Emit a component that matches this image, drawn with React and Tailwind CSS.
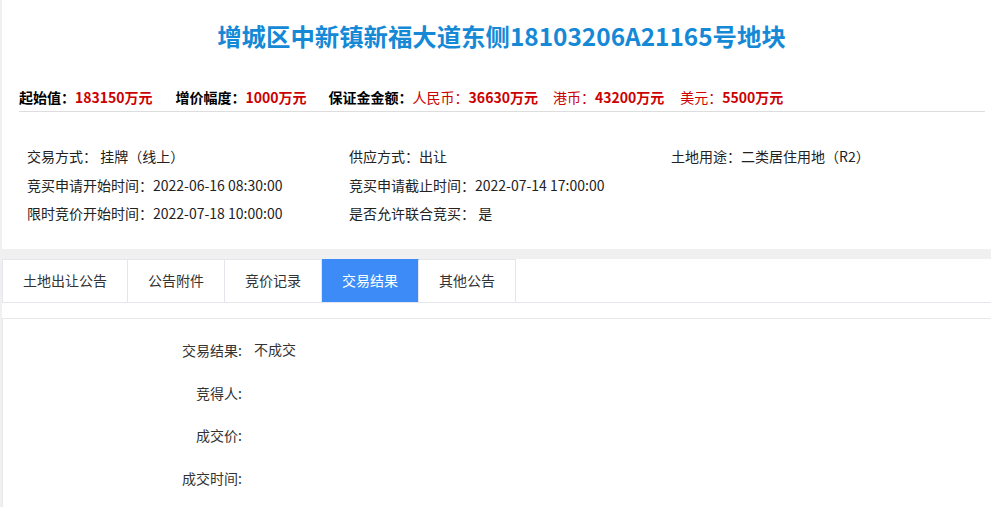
export default function App() {
  const font = { fontFamily: '"Microsoft YaHei", "Noto Sans CJK SC", sans-serif' };
  const info = [
    ["交易方式： 挂牌（线上）", "供应方式：出让", "土地用途：二类居住用地（R2）"],
    ["竞买申请开始时间：2022-06-16 08:30:00", "竞买申请截止时间：2022-07-14 17:00:00", ""],
    ["限时竞价开始时间：2022-07-18 10:00:00", "是否允许联合竞买： 是", ""],
  ];
  const tabs = ["土地出让公告", "公告附件", "竞价记录", "交易结果", "其他公告"];
  const rows = [
    ["交易结果:", "不成交"],
    ["竞得人:", ""],
    ["成交价:", ""],
    ["成交时间:", ""],
  ];
  return (
    <div className="min-h-screen bg-[#f0f0f0] pl-[2px] text-[#333]" style={font}>
      {/* top section */}
      <div className="bg-white pt-[18px] pb-[21px]">
        <h1 className="text-center text-[24.4px] leading-[36px] font-bold text-[#1589d6] pl-[10px]">
          增城区中新镇新福大道东侧18103206A21165号地块
        </h1>
        <div className="mt-[33px] ml-[17px] mr-[6px] border-b border-[#dddddd] pb-[4px]">
          <div className="flex items-center text-[14px] leading-[20px] font-bold text-black">
            <span className="mr-[23px]">
              起始值：<span className="text-[#cc0000]">183150万元</span>
            </span>
            <span className="mr-[22px]">
              增价幅度：<span className="text-[#cc0000]">1000万元</span>
            </span>
            <span>
              保证金金额：
              <span className="text-[#cc0000] font-normal">人民币：</span>
              <span className="text-[#cc0000] mr-[15px]">36630万元</span>
              <span className="text-[#cc0000] font-normal">港币：</span>
              <span className="text-[#cc0000] mr-[16px]">43200万元</span>
              <span className="text-[#cc0000] font-normal">美元：</span>
              <span className="text-[#cc0000]">5500万元</span>
            </span>
          </div>
        </div>
        <div className="mt-[30px] ml-[25px] text-[14px] leading-[28.5px] text-[#222]">
          {info.map((r, i) => (
            <div key={i} className="grid grid-cols-[322px_322px_322px]">
              {r.map((c, j) => (
                <div key={j}>{c}</div>
              ))}
            </div>
          ))}
        </div>
      </div>
      {/* gray band */}
      <div className="h-[10px]" />
      {/* tabs */}
      <div className="flex bg-white border-b border-[#e4e6eb]">
        {tabs.map((t, i) => (
          <div
            key={t}
            className={
              "h-[43px] px-[20px] flex items-center justify-center text-[14px] border-t border-r border-[#e4e6eb] " +
              (i === 0 ? "border-l " : "") +
              (i === 3 ? "bg-[#3d8bf7] text-white border-t-[#3d8bf7]" : "bg-white text-[#333]")
            }
          >
            {t}
          </div>
        ))}
      </div>
      <div className="h-[15px] bg-white" />
      {/* content */}
      <div className="bg-white border-t border-l border-[#e8e8ec] pt-[11px] pb-[20px] text-[14px] text-[#333]">
        {rows.map(([l, v]) => (
          <div key={l} className="flex items-center h-[42.5px]">
            <div className="w-[239px] text-right">{l}</div>
            <div className="ml-[12px] -mt-[2px]">{v}</div>
          </div>
        ))}
      </div>
    </div>
  );
}
